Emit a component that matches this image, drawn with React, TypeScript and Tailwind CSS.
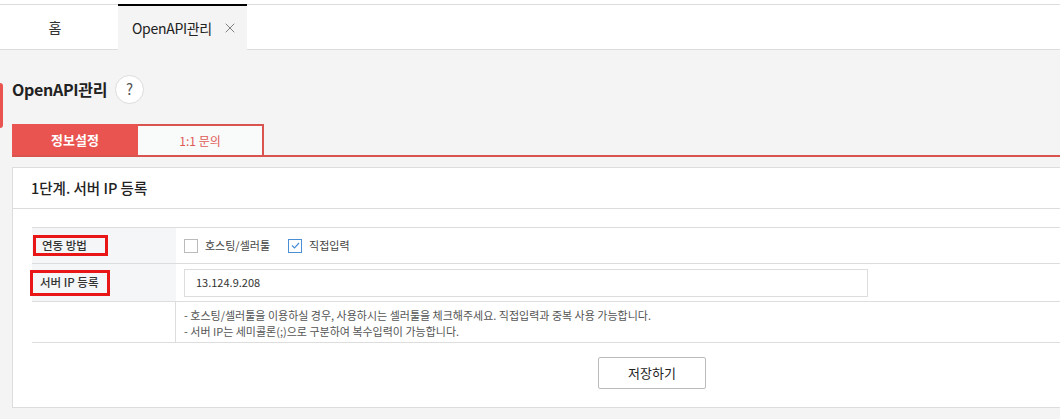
import { X } from 'lucide-react';

const font = { fontFamily: '"Noto Sans CJK KR", "Noto Sans", sans-serif' };

export default function App() {
  return (
    <div className="w-[1060px] h-[419px] overflow-hidden bg-[#f4f4f4] relative" style={font}>
      {/* top tab bar */}
      <div className="h-[4px] bg-white" />
      <div className="flex h-[46px] bg-white border-y border-[#dddddd]">
        <div className="w-[118px] flex items-center justify-center pr-[8px] text-[14px] text-[#333]">홈</div>
        <div className="w-[129px] -mt-px border-t-2 border-black bg-[#f4f4f4] flex items-center pl-[14px] gap-[10px] text-[14px] text-[#222] mb-[-1px]">
          <span className="tracking-[-0.3px]">OpenAPI관리</span>
          <X className="w-[16px] h-[16px] text-[#777]" strokeWidth={1.4} />
        </div>
      </div>

      <div className="absolute left-0 top-[83px] w-[3px] h-[45px] bg-[#e95451] rounded-r-[3px]" />

      <div className="pl-[12px]">
        <div className="mt-[24px] flex items-center h-[30px] gap-[8px]">
          <h1 className="text-[16px] font-semibold text-[#222] tracking-[-0.3px]">OpenAPI관리</h1>
          <div className="w-[29px] h-[29px] rounded-full bg-white border border-[#dcdcdc] flex items-center justify-center text-[15px] text-[#555]">?</div>
        </div>

        <div className="mt-[20px] flex h-[33px] border-b-2 border-[#d9534f]">
          <div className="w-[126px] bg-[#e95451] flex items-center justify-center text-[13px] font-semibold text-white">정보설정</div>
          <div className="w-[126px] bg-[#f9fbfb] border-2 border-b-0 border-l-0 border-[#d9534f] flex items-center justify-center text-[12px] text-[#e05a55]">1:1 문의</div>
        </div>

        <div className="mt-[10px] w-[1100px] bg-white border border-[#dddddd]">
          <div className="h-[41px] border-b border-[#dddddd] flex items-center pl-[18px] text-[14.5px] font-medium text-[#222]">1단계. 서버 IP 등록</div>

          <div className="mt-[18px] ml-[19px] border-y border-[#dddddd] text-[11.5px] text-[#333]">
            <div className="flex h-[36px] border-b border-[#dddddd]">
              <div className="w-[144px] bg-[#f4f6f8] flex items-center">
                <span className="ml-px pl-[6px] h-[21px] w-[75px] flex items-center border-[3px] border-[#e81616] font-medium whitespace-nowrap">연동 방법</span>
              </div>
              <div className="flex items-center pl-[8px] gap-[7px]">
                <span className="w-[14px] h-[14px] border border-[#bbbbbb] bg-white" />
                <span className="text-[#444] text-[11px]">호스팅/셀러툴</span>
                <span className="ml-[11px] w-[14px] h-[14px] border border-[#4a8ed6] bg-white flex items-center justify-center">
                  <svg width="9" height="7" viewBox="0 0 9 7" fill="none">
                    <path d="M1 3.5L3.5 6L8 1" stroke="#4a8ed6" strokeWidth="1.2" />
                  </svg>
                </span>
                <span className="text-[#444] text-[11px]">직접입력</span>
              </div>
            </div>
            <div className="flex h-[38px] border-b border-[#dddddd]">
              <div className="w-[144px] bg-[#f4f6f8] flex items-center">
                <span className="-ml-[2px] pl-[7px] h-[26px] w-[80px] flex items-center border-[3px] border-[#e81616] font-medium whitespace-nowrap">서버 IP 등록</span>
              </div>
              <div className="flex items-center pl-[8px]">
                <div className="w-[684px] h-[28px] border border-[#dddddd] flex items-center pl-[11px] text-[11px] text-[#333]">13.124.9.208</div>
              </div>
            </div>
            <div className="flex h-[40px]">
              <div className="w-[144px] bg-white border-r border-[#dddddd]" />
              <div className="pl-[8px] pt-[5px] text-[11px] text-[#555] leading-[16px]">
                <p>- 호스팅/셀러툴을 이용하실 경우, 사용하시는 셀러툴을 체크해주세요. 직접입력과 중복 사용 가능합니다.</p>
                <p>- 서버 IP는 세미콜론(;)으로 구분하여 복수입력이 가능합니다.</p>
              </div>
            </div>
          </div>

          <div className="flex pl-[585px] pt-[14px] pb-[18px]">
            <button className="w-[108px] h-[32px] border border-[#bbbbbb] rounded-[2px] bg-white text-[13px] text-[#222]">저장하기</button>
          </div>
        </div>
      </div>
    </div>
  );
}
